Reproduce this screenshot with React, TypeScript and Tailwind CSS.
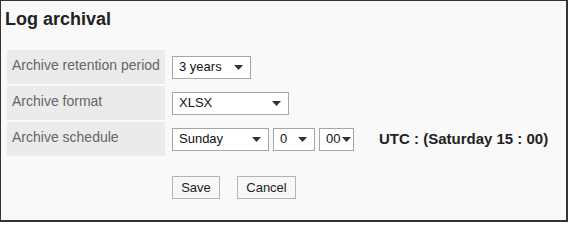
const font = { fontFamily: '"Liberation Sans", Arial, sans-serif' };

function Caret() {
  return (
    <svg width="9" height="5" viewBox="0 0 9 5" className="shrink-0">
      <path d="M0 0H9L4.5 5Z" fill="#333" />
    </svg>
  );
}

function FakeSelect({
  value,
  width,
  tight = false,
}: {
  value: string;
  width: string;
  tight?: boolean;
}) {
  return (
    <div
      className={`${width} ${tight ? "pr-[2px]" : "pr-[7px]"} flex h-[23px] items-center justify-between border border-[#a6a6a6] bg-white pl-[6px] text-[13px] text-[#111]`}
    >
      <span>{value}</span>
      <Caret />
    </div>
  );
}

function Row({ label, children }: { label: string; children: React.ReactNode }) {
  return (
    <div className="flex h-[34px] items-stretch">
      <div className="w-[158px] shrink-0 bg-[#ebebeb] pl-[5px] pt-[7px] text-[14px] leading-[16px] text-[#666]">
        {label}
      </div>
      <div className="ml-[7px] flex items-center">{children}</div>
    </div>
  );
}

export default function App() {
  return (
    <div
      className="h-[222px] w-[568px] border-l border-t border-r-2 border-b-2 border-[#333] bg-[#f9f9f9]"
      style={font}
    >
      {/* Title */}
      <h1 className="pl-[4px] pt-[8px] text-[18px] font-bold leading-[20px] text-[#222]">
        Log archival
      </h1>

      {/* Settings table */}
      <div className="ml-[6px] mt-[21px] flex flex-col gap-[2px]">
        <Row label="Archive retention period">
          <FakeSelect value="3 years" width="w-[79px]" />
        </Row>
        <Row label="Archive format">
          <FakeSelect value="XLSX" width="w-[117px]" />
        </Row>
        <Row label="Archive schedule">
          <div className="flex items-center gap-[4px]">
            <FakeSelect value="Sunday" width="w-[97px]" />
            <FakeSelect value="0" width="w-[42px]" />
            <FakeSelect value="00" width="w-[35px]" tight />
          </div>
          <span className="ml-[25px] text-[15px] font-bold text-[#222]">
            UTC : (Saturday 15 : 00)
          </span>
        </Row>
      </div>

      {/* Actions */}
      <div className="ml-[171px] mt-[20px] flex gap-[17px]">
        <button className="h-[23px] w-[48px] border border-[#b4b4b4] bg-[#f7f7f7] text-[13px] text-[#222]">
          Save
        </button>
        <button className="h-[23px] w-[59px] border border-[#b4b4b4] bg-[#f7f7f7] text-[13px] text-[#222]">
          Cancel
        </button>
      </div>
    </div>
  );
}
